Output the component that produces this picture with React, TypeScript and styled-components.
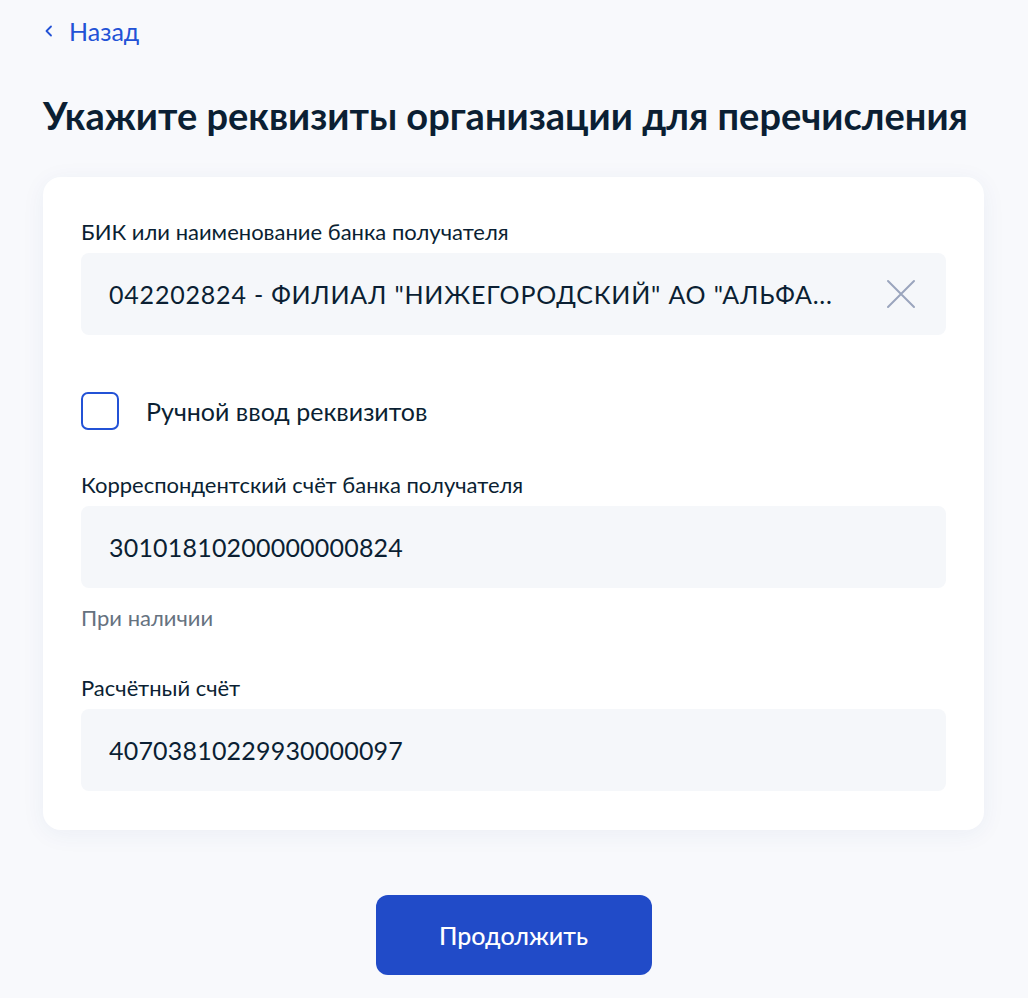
import styled, { createGlobalStyle } from "styled-components";

const GlobalStyle = createGlobalStyle`
  html, body {
    margin: 0;
    padding: 0;
    background: #f8f9fc;
    font-family: Lato, "Noto Sans", sans-serif;
    color: #0b1f33;
  }
  * { box-sizing: border-box; }
`;

const Page = styled.main`
  width: 1028px;
  min-height: 998px;
  padding: 17px 43px 0 43px;
`;

const BackLink = styled.a`
  display: inline-flex;
  align-items: center;
  gap: 14px;
  color: #2352d6;
  font-size: 25px;
  line-height: 28px;
  text-decoration: none;
  height: 28px;
  cursor: pointer;

  svg {
    width: 12px;
    height: 12px;
  }
`;

const Title = styled.h1`
  margin: 47px 0 39px;
  font-size: 38px;
  line-height: 46px;
  font-weight: 700;
  color: #0b1f33;
`;

const Card = styled.section`
  width: 941px;
  background: #ffffff;
  border-radius: 18px;
  box-shadow: 0 4px 24px rgba(30, 60, 140, 0.06);
  padding: 42px 38px 39px;
  display: flex;
  flex-direction: column;
`;

const Label = styled.div`
  font-size: 22px;
  line-height: 26px;
  margin-bottom: 8px;
`;

const Field = styled.div<{ $spacing?: number }>`
  height: 82px;
  flex-shrink: 0;
  background: #f5f7fa;
  border-radius: 8px;
  display: flex;
  align-items: center;
  justify-content: space-between;
  padding: 0 30px 0 28px;
  font-size: 25px;
  letter-spacing: ${(p) => p.$spacing ?? 0.2}px;
`;

const FieldText = styled.span`
  white-space: nowrap;
  overflow: hidden;
  text-overflow: ellipsis;
`;

const ClearButton = styled.button`
  border: none;
  background: none;
  padding: 0;
  display: flex;
  cursor: pointer;
`;

const CheckRow = styled.label`
  display: flex;
  align-items: center;
  gap: 27px;
  margin: 57px 0 42px;
  font-size: 25px;
  cursor: pointer;
`;

const CheckBox = styled.span`
  width: 38px;
  height: 38px;
  border: 2px solid #2352d6;
  border-radius: 7px;
  background: #fff;
`;

const Hint = styled.div`
  color: #66727f;
  font-size: 22px;
  line-height: 26px;
  margin: 17px 0 44px;
`;

const Actions = styled.div`
  width: 941px;
  display: flex;
  justify-content: center;
  padding-top: 65px;
`;

const PrimaryButton = styled.button`
  width: 276px;
  height: 80px;
  border: none;
  border-radius: 12px;
  background: #214bc8;
  color: #fff;
  font-family: Lato, "Noto Sans", sans-serif;
  font-size: 25px;
  font-weight: 500;
  cursor: pointer;
`;

export default function App() {
  return (
    <>
      <GlobalStyle />
      <Page>
        <BackLink>
          <svg viewBox="0 0 12 12" fill="none">
            <path d="M8 1.5L3.5 6L8 10.5" stroke="#2352d6" strokeWidth="1.8" strokeLinecap="round" strokeLinejoin="round" />
          </svg>
          Назад
        </BackLink>
        <Title>Укажите реквизиты организации для перечисления</Title>
        <Card>
          <Label>БИК или наименование банка получателя</Label>
          <Field $spacing={0.8}>
            <FieldText>042202824 - ФИЛИАЛ "НИЖЕГОРОДСКИЙ" АО "АЛЬФА...</FieldText>
            <ClearButton aria-label="Очистить">
              <svg width="30" height="30" viewBox="0 0 30 30" fill="none">
                <path d="M2 2L28 28M28 2L2 28" stroke="#9aa5bd" strokeWidth="2" strokeLinecap="round" />
              </svg>
            </ClearButton>
          </Field>
          <CheckRow>
            <CheckBox />
            Ручной ввод реквизитов
          </CheckRow>
          <Label>Корреспондентский счёт банка получателя</Label>
          <Field>
            <FieldText>30101810200000000824</FieldText>
          </Field>
          <Hint>При наличии</Hint>
          <Label>Расчётный счёт</Label>
          <Field>
            <FieldText>40703810229930000097</FieldText>
          </Field>
        </Card>
        <Actions>
          <PrimaryButton>Продолжить</PrimaryButton>
        </Actions>
      </Page>
    </>
  );
}
